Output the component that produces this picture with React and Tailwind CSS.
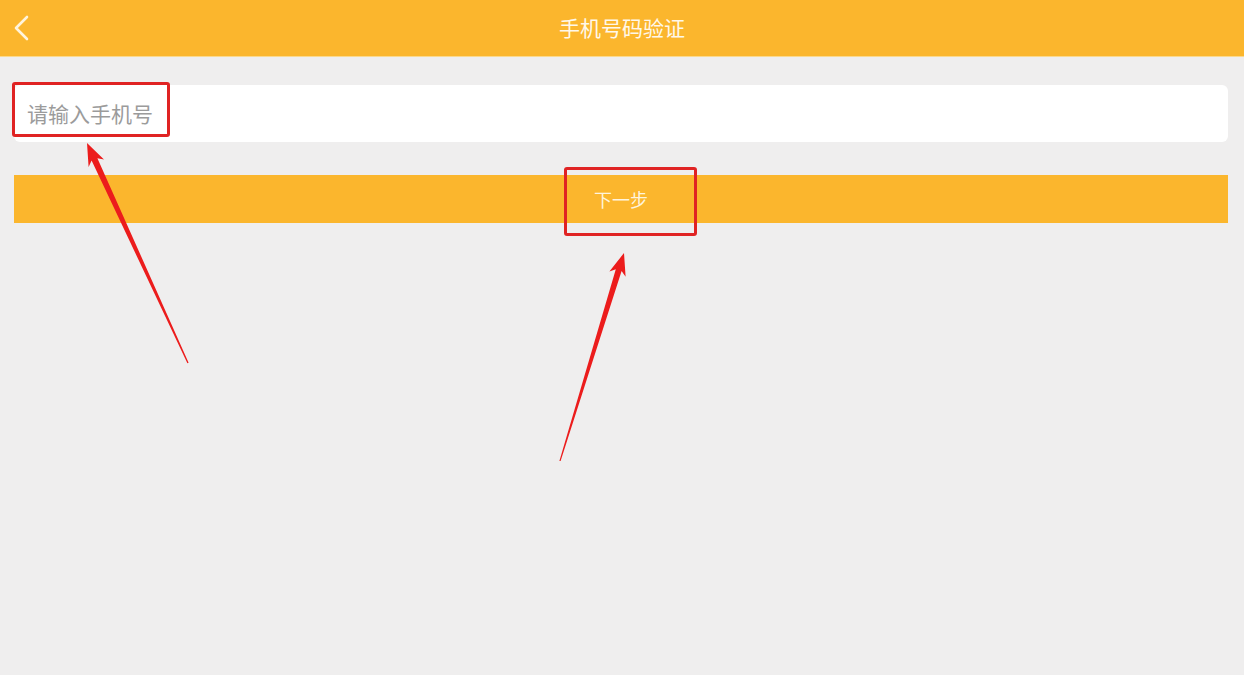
import React from "react";

const font = { fontFamily: '"Noto Sans CJK SC", "Noto Sans", sans-serif' };

function Annotations() {
  // red markup drawn over the screenshot
  return (
    <div className="pointer-events-none absolute inset-0">
      <div className="absolute left-[12px] top-[82px] h-[55px] w-[158px] rounded-[3px] border-[3px] border-[#e02323]" />
      <div className="absolute left-[564px] top-[167px] h-[69px] w-[133px] rounded-[3px] border-[3px] border-[#e02323]" />
      <svg className="absolute inset-0" width="1244" height="675" viewBox="0 0 1244 675">
        <polygon
          fill="#ec1c1c"
          points="87,143 104,159.5 97.4,158.2 188.6,362.8 187.4,363.2 91.6,160.6 88.6,167"
        />
        <polygon
          fill="#ec1c1c"
          points="624,253 625.6,276.8 621.6,271 560.6,461.1 559.4,460.9 615.8,269.3 609.4,271.4"
        />
      </svg>
    </div>
  );
}

export default function App() {
  return (
    <div className="relative h-[675px] w-[1244px] overflow-hidden bg-[#efeeee]" style={font}>
      <div className="flex h-[57px] items-center border-b border-[#fbd98c] bg-[#fbb62d] px-[12px]">
        <div className="w-[40px]">
          <svg width="20" height="26" viewBox="0 0 20 26" fill="none">
            <polyline points="15,2 4,13 15,24" stroke="#fff4dc" strokeWidth="2.6" strokeLinecap="round" strokeLinejoin="round" />
          </svg>
        </div>
        <div className="flex-1 text-center text-[21px] text-[#fff8ea]">手机号码验证</div>
        <div className="w-[40px]" />
      </div>

      <div className="flex flex-col gap-[33px] pl-[14px] pr-[16px] pt-[28px]">
        <div className="flex h-[57px] items-center rounded-md bg-white px-[13px]">
          <span className="text-[21px] text-[#9b9b9b]">请输入手机号</span>
        </div>
        <div className="flex h-[48px] items-center justify-center bg-[#fbb62d]">
          <span className="text-[18px] text-[#fff4dc]">下一步</span>
        </div>
      </div>

      <Annotations />
    </div>
  );
}
